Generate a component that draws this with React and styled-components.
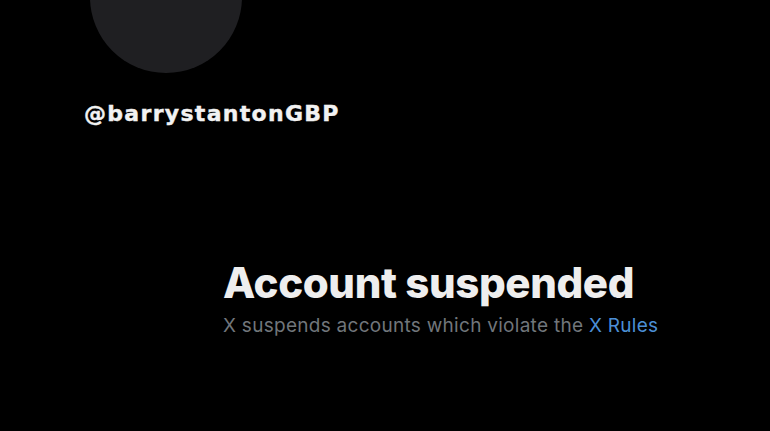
import React from "react";
import styled, { createGlobalStyle } from "styled-components";

const GlobalStyle = createGlobalStyle`
    html, body {
        margin: 0;
        padding: 0;
        background: #000;
    }
    body {
        font-family: Inter, "Noto Sans", "Liberation Sans", sans-serif;
        overflow: hidden;
    }
`;

function App() {
    return (
        <>
            <GlobalStyle />
            <Page>
                <Profile>
                    <Avatar />
                    <Handle>@barrystantonGBP</Handle>
                </Profile>
                <Notice>
                    <Title>Account suspended</Title>
                    <Message>
                        X suspends accounts which violate the <RulesLink href="#">X Rules</RulesLink>
                    </Message>
                </Notice>
            </Page>
        </>
    );
}

const Page = styled.div`
    width: 770px;
    height: 431px;
    background: #000;
    display: flex;
    flex-direction: column;
    overflow: hidden;
`;

const Profile = styled.div`
    display: flex;
    flex-direction: column;
    align-items: flex-start;
    padding-left: 84px;
`;

const Avatar = styled.div`
    width: 152px;
    height: 152px;
    margin-top: -79px;
    margin-left: 6px;
    border-radius: 50%;
    background: #1f1f22;
`;

const Handle = styled.div`
    margin-top: 28px;
    color: #f2f2f2;
    font-family: "DejaVu Sans", Inter, sans-serif;
    font-size: 22px;
    font-weight: 700;
    letter-spacing: 1.3px;
    -webkit-text-stroke: 0.4px #f2f2f2;
`;

const Notice = styled.div`
    display: flex;
    flex-direction: column;
    padding-left: 223px;
    margin-top: 131px;
`;

const Title = styled.h1`
    margin: 0;
    color: #eeeeee;
    font-size: 42px;
    font-weight: 800;
    letter-spacing: -0.4px;
    line-height: 52px;
`;

const Message = styled.p`
    margin: 5px 0 0 0;
    color: #71767b;
    font-size: 19px;
    letter-spacing: 0.28px;
    line-height: 24px;
`;

const RulesLink = styled.a`
    color: #4b8fd6;
    text-decoration: none;
`;

export default App;
